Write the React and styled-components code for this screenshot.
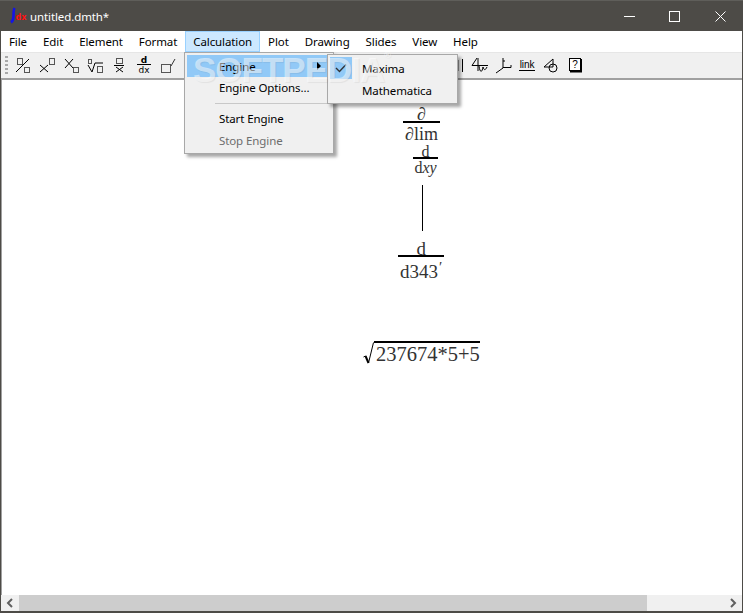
import styled, { createGlobalStyle } from "styled-components"

const GlobalStyle = createGlobalStyle`
  html, body {
    margin: 0;
    padding: 0;
    background: #fff;
  }
  body {
    font-family: "Noto Sans", "Open Sans", sans-serif;
    font-size: 11.5px;
    letter-spacing: -0.1px;
    color: #000;
  }
`

const menus = ["File", "Edit", "Element", "Format", "Calculation", "Plot", "Drawing", "Slides", "View", "Help"]

const Box = ({ x, y, w, h }) => <rect x={x + 0.5} y={y + 0.5} width={w} height={h} fill="none" stroke="#555" />
const Cross = ({ x1, y1, x2, y2 }) => <path d={`M${x1} ${y1}L${x2} ${y2}M${x1} ${y2}L${x2} ${y1}`} stroke="#000" fill="none" />

const tools = [
  <><Box x={6} y={6} w={5} h={6} /><Box x={13} y={15} w={5} h={5} /><path d="M5 20L18 7" stroke="#000" /></>,
  <><Cross x1={5} y1={13} x2={13} y2={20} /><Box x={14} y={6} w={5} h={6} /></>,
  <><Cross x1={6} y1={7} x2={14} y2={16} /><Box x={14} y={15} w={5} h={5} /></>,
  <><Box x={5} y={7} w={3} h={4} /><path d="M5 13L9 20L12 11H20" stroke="#000" fill="none" /><Box x={14} y={14} w={5} h={6} /></>,
  <><Box x={9} y={6} w={6} h={5} /><path d="M7 13.5H17" stroke="#000" /><Cross x1={9} y1={15} x2={16} y2={20} /></>,
  <><text x={13} y={11} textAnchor="middle" fontSize="9" fontWeight="bold" fontFamily="'DejaVu Sans', sans-serif" fill="#000">d</text><path d="M6 12.5H20" stroke="#000" /><text x={13} y={21} textAnchor="middle" fontSize="9" fontFamily="'DejaVu Sans', sans-serif" fill="#000">dx</text></>,
  <><Box x={6} y={12} w={9} h={8} /><path d="M16 14L20 7" stroke="#333" /></>,
]

const rightTools = [
  <><path d="M5 13.5H21M10 6L5 13.5M11 6V19M12 14C13 21 15 21 16 15C17 18 18 19 20 15" stroke="#000" fill="none" /></>,
  <><path d="M12 6V16M12 15.5H20V13M12 16L5 21M12 9H14" stroke="#000" fill="none" /></>,
  <><text x={12} y={16} textAnchor="middle" fontSize="10" fontFamily="'Liberation Sans', sans-serif" fill="#000">link</text><path d="M4 18.5H20" stroke="#000" /></>,
  <><path d="M5 15L14 7V15H5" stroke="#000" fill="none" /><circle cx={14} cy={16} r={4} stroke="#000" fill="none" /></>,
  <><rect x={6.5} y={6.5} width={11} height={12} fill="#fff" stroke="#000" /><path d="M18 7V19.5H7" stroke="#000" strokeWidth="2" fill="none" /><text x={12} y={16} textAnchor="middle" fontSize="10" fontFamily="'Liberation Sans', sans-serif" fill="#000">?</text></>,
]

export default function App() {
  return (
    <Win>
      <GlobalStyle />
      <TitleBar>
        <AppIcon viewBox="0 0 18 18">
          <path d="M5.5 1C4.5 3 4.5 6 4.5 9C4.5 12 4 14 2 15.5" stroke="#1414e6" strokeWidth="2.6" fill="none" />
          <text x={6.5} y={13} fontSize="8" fontWeight="600" fontFamily="'DejaVu Sans', sans-serif" fill="#ff1010">dx</text>
        </AppIcon>
        <Title>untitled.dmth*</Title>
        <WinButtons>
          <WinButton>
            <svg width="11" height="11"><path d="M0 5.5H11" stroke="#fff" /></svg>
          </WinButton>
          <WinButton>
            <svg width="11" height="11"><rect x=".5" y=".5" width="10" height="10" fill="none" stroke="#fff" /></svg>
          </WinButton>
          <WinButton $wide>
            <svg width="11" height="11"><path d="M.5 .5L10.5 10.5M10.5 .5L.5 10.5" stroke="#fff" /></svg>
          </WinButton>
        </WinButtons>
      </TitleBar>

      <MenuBar>
        {menus.map((m) => (
          <MenuItem key={m} $open={m === "Calculation"}>{m}</MenuItem>
        ))}
      </MenuBar>

      <ToolBar>
        <Grip />
        {tools.map((t, i) => (
          <Tool key={i}><svg width="24" height="26">{t}</svg></Tool>
        ))}
        <ToolGap />
        <Tool>
          <svg width="24" height="26">
            <rect x="8.5" y="8.5" width="7" height="10" fill="none" stroke="#999" />
            <path d="M19.5 7V20" stroke="#000" />
          </svg>
        </Tool>
        {rightTools.map((t, i) => (
          <Tool key={i}><svg width="24" height="26">{t}</svg></Tool>
        ))}
      </ToolBar>

      <Canvas>
        <Placed $x={401} $y={25}>
          <Fraction $size={18} $bar={2}>
            <Num><i>∂</i></Num>
            <Den $side={2}><i>∂</i>lim</Den>
          </Fraction>
        </Placed>
        <Placed $x={411} $y={62}>
          <Fraction $size={16} $bar={2} $numH={15}>
            <Num $lh={20}>d</Num>
            <Den $gap={1} $side={1.5}>d<i>xy</i></Den>
          </Fraction>
        </Placed>
        <VLine />
        <Placed $x={396} $y={159}>
          <Fraction $size={19} $bar={2}>
            <Num>d</Num>
            <Den $gap={5} $side={2}>d343<sup>′</sup></Den>
          </Fraction>
        </Placed>
        <Placed $x={360} $y={261}>
          <Root>
            <svg width="12" height="24"><path d="M1.5 16L3.5 15" stroke="#000" fill="none" /><path d="M3.5 15L6.5 22" stroke="#000" strokeWidth="2" fill="none" /><path d="M6.5 22L11.5 1.5" stroke="#000" fill="none" /></svg>
            <Radicand>237674*5+5</Radicand>
          </Root>
        </Placed>
      </Canvas>

      <ScrollBar>
        <Arrow>
          <svg width="8" height="10"><path d="M6 1L2 5L6 9" stroke="#606060" strokeWidth="2" fill="none" /></svg>
        </Arrow>
        <Track><Thumb /></Track>
        <Arrow>
          <svg width="8" height="10"><path d="M2 1L6 5L2 9" stroke="#606060" strokeWidth="2" fill="none" /></svg>
        </Arrow>
      </ScrollBar>

      <Dropdown>
        <DropItem $active>Engine<SubArrow /></DropItem>
        <DropItem>Engine Options...</DropItem>
        <Separator />
        <DropItem>Start Engine</DropItem>
        <DropItem $disabled>Stop Engine</DropItem>
      </Dropdown>

      <SubMenu>
        <SubItem>
          <CheckMark>
            <svg width="12" height="10"><path d="M1 5L4.5 8.5L11 1.5" stroke="#333" strokeWidth="1.4" fill="none" /></svg>
          </CheckMark>
          Maxima
        </SubItem>
        <SubItem><CheckSpace />Mathematica</SubItem>
      </SubMenu>

      <Watermark>SOFTPEDIA<small>®</small></Watermark>
    </Win>
  )
}

const Win = styled.div`
  position: relative;
  width: 743px;
  height: 613px;
  overflow: hidden;
  display: flex;
  flex-direction: column;
  background: #4d4b47;
  box-sizing: border-box;
  padding: 0 1px 2px 1px;
`

const TitleBar = styled.div`
  height: 31px;
  margin: 0 -1px;
  display: flex;
  align-items: center;
  padding-left: 9px;
  background: #4d4b47;
  border-top: 1px solid #5f5e5a;
  box-sizing: border-box;
  flex-shrink: 0;
`

const AppIcon = styled.svg`
  width: 18px;
  height: 18px;
  flex-shrink: 0;
`

const Title = styled.div`
  color: #fff;
  margin-left: 3px;
`

const WinButtons = styled.div`
  margin-left: auto;
  display: flex;
`

const WinButton = styled.div`
  width: ${(p) => (p.$wide ? 46 : 45)}px;
  height: 30px;
  display: flex;
  align-items: center;
  justify-content: center;
`

const MenuBar = styled.div`
  height: 21px;
  background: #fff;
  display: flex;
  flex-shrink: 0;
`

const MenuItem = styled.div`
  padding: 0 7px;
  display: flex;
  align-items: center;
  box-sizing: border-box;
  border: 1px solid ${(p) => (p.$open ? "#99d1ff" : "transparent")};
  background: ${(p) => (p.$open ? "#cce8ff" : "transparent")};
`

const ToolBar = styled.div`
  height: 26px;
  background: #f0f0f0;
  border-top: 1px solid #e6e6e6;
  box-sizing: border-box;
  display: flex;
  flex-shrink: 0;
  padding-left: 2px;
`

const Grip = styled.div`
  width: 3px;
  margin: 3px 3px 3px 2px;
  background: repeating-linear-gradient(to bottom, #a8a8a8 0 2px, transparent 2px 4px);
`

const Tool = styled.div`
  width: 24px;
  height: 26px;
  flex-shrink: 0;
  margin-top: -1px;
`

const ToolGap = styled.div`
  width: 264px;
  flex-shrink: 0;
`

const Canvas = styled.div`
  position: relative;
  flex: 1;
  background: #fff;
  border-top: 2px solid #a0a0a0;
  border-left: 1px solid #a0a0a0;
  font-family: "Liberation Serif", serif;
  letter-spacing: 0;
  color: #333;
`

const Placed = styled.div`
  position: absolute;
  left: ${(p) => p.$x}px;
  top: ${(p) => p.$y}px;
`

const Fraction = styled.div`
  display: inline-flex;
  flex-direction: column;
  align-items: center;
  font-size: ${(p) => p.$size}px;
  line-height: 1;
  & > div:first-child {
    height: ${(p) => p.$numH || 16}px;
    border-bottom: ${(p) => p.$bar}px solid #000;
  }
`

const Num = styled.div`
  text-align: center;
  align-self: stretch;
  line-height: ${(p) => (p.$lh ? `${p.$lh}px` : 1)};
`

const Den = styled.div`
  padding: ${(p) => (p.$gap === undefined ? 2 : p.$gap)}px ${(p) => p.$side}px 0;
  white-space: nowrap;
  sup {
    font-size: 15px;
    line-height: 0;
    margin-left: 1px;
    vertical-align: 6px;
  }
`

const VLine = styled.div`
  position: absolute;
  left: 420px;
  top: 105px;
  width: 1px;
  height: 46px;
  background: #000;
`

const Root = styled.div`
  display: flex;
  align-items: flex-start;
`

const Radicand = styled.div`
  border-top: 2px solid #000;
  font-size: 20.5px;
  line-height: 22px;
  padding: 0 0 0 2px;
  white-space: nowrap;
`

const ScrollBar = styled.div`
  height: 16px;
  background: #f0f0f0;
  display: flex;
  flex-shrink: 0;
`

const Arrow = styled.div`
  width: 18px;
  display: flex;
  align-items: center;
  justify-content: center;
  flex-shrink: 0;
`

const Track = styled.div`
  flex: 1;
`

const Thumb = styled.div`
  width: 628px;
  height: 100%;
  background: #cdcdcd;
`

const Dropdown = styled.div`
  position: absolute;
  left: 184px;
  top: 52px;
  width: 150px;
  height: 102px;
  box-sizing: border-box;
  padding: 2px;
  background: #f0f0f0;
  border: 1px solid #a8a8a8;
  box-shadow: 3px 3px 3px rgba(0, 0, 0, 0.35);
`

const DropItem = styled.div`
  position: relative;
  height: 22px;
  line-height: ${(p) => (p.$active ? 23 : 22)}px;
  padding-left: 32px;
  background: ${(p) => (p.$active ? "#91c9f7" : "transparent")};
  color: ${(p) => (p.$disabled ? "#6d6d6d" : "#000")};
`

const SubArrow = styled.div`
  position: absolute;
  right: 10px;
  top: 7px;
  border-left: 4px solid #000;
  border-top: 4px solid transparent;
  border-bottom: 4px solid transparent;
`

const Separator = styled.div`
  height: 1px;
  margin: 4px 2px 4px 28px;
  background: #c8c8c8;
`

const SubMenu = styled.div`
  position: absolute;
  left: 327px;
  top: 54px;
  width: 131px;
  height: 50px;
  box-sizing: border-box;
  padding: 2px;
  background: #f0f0f0;
  border: 1px solid #a8a8a8;
  box-shadow: 3px 3px 3px rgba(0, 0, 0, 0.35);
`

const SubItem = styled.div`
  height: 22px;
  display: flex;
  align-items: center;
`

const CheckMark = styled.div`
  width: 22px;
  height: 22px;
  margin-right: 10px;
  background: #91c9f7;
  display: flex;
  align-items: center;
  justify-content: center;
`

const CheckSpace = styled.div`
  width: 32px;
`

const Watermark = styled.div`
  position: absolute;
  left: 193px;
  top: 50px;
  font-family: "Liberation Sans", sans-serif;
  font-weight: bold;
  font-size: 35px;
  letter-spacing: -1px;
  color: rgba(255, 255, 255, 0.5);
  text-shadow: 1px 1px 1px rgba(0, 0, 0, 0.06);
  white-space: nowrap;
  pointer-events: none;
  small {
    font-size: 9px;
    vertical-align: top;
  }
`
